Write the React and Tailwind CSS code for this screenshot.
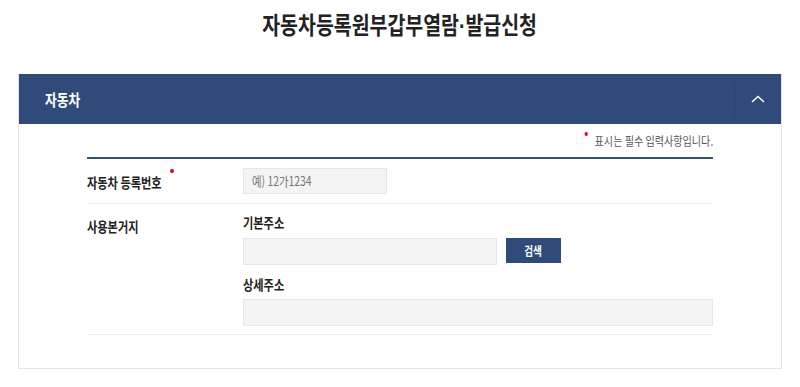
const font = { fontFamily: '"Noto Sans CJK KR", "Noto Sans", sans-serif' };

// the reference type is set narrow, so text runs are squeezed horizontally
const narrow = "whitespace-nowrap scale-x-[0.8] origin-left";

const Field = ({ className = "", placeholder = "" }) => (
  <div className={`bg-[#f4f4f4] border border-[#e6e6e6] flex items-center px-[8px] ${className}`}>
    {placeholder && <span className={`${narrow} inline-block text-[13px] text-[#777]`}>{placeholder}</span>}
  </div>
);

const Label = ({ children, className = "" }) => (
  <span className={`${narrow} block text-[14px] leading-[20px] font-bold text-[#222] ${className}`}>{children}</span>
);

export default function App() {
  return (
    <div className="w-[800px] h-[387px] bg-white overflow-hidden text-[14px] leading-[20px]" style={font}>
      {/* TITLE */}
      <div className="pt-[8px] h-[74px] flex justify-center">
        <h1 className="inline-block whitespace-nowrap scale-x-[0.81] origin-center text-[24px] leading-[32px] font-bold text-[#222]">
          자동차등록원부갑부열람<span className="font-['Liberation_Sans',sans-serif]">·</span>발급신청
        </h1>
      </div>

      {/* PANEL */}
      <section className="mx-[18px] border border-[#e4e4e4] border-t-0">
        <div className="h-[50px] bg-[#2f4b79] flex items-center justify-between">
          <h2 className={`${narrow} inline-block ml-[26px] text-white text-[16px] font-bold`}>자동차</h2>
          <div className="h-[36px] w-[47px] border-l border-[#294371] flex items-center justify-center">
            <svg width="14" height="8" viewBox="0 0 14 8" fill="none">
              <path d="M1 7 L7 1.5 L13 7" stroke="white" strokeWidth="1.5" />
            </svg>
          </div>
        </div>

        <div className="px-[68px] pb-[33px]">
          <div className="h-[33px] pt-[9px] flex justify-end">
            <p className="inline-flex items-start whitespace-nowrap scale-x-[0.84] origin-right text-[12px] leading-[16px] text-[#555]">
              <span className="w-[4px] h-[4px] rounded-full bg-[#e60012] mr-[8px] -mt-[1px]" />
              표시는 필수 입력사항입니다.
            </p>
          </div>

          <div className="border-t-2 border-[#34507f]">
            {/* ROW 1 */}
            <div className="flex items-center h-[45px] border-b border-[#eeeeee]">
              <div className="w-[156px] flex items-start">
                <Label className="mt-[1px]">자동차 등록번호</Label>
                <span className="shrink-0 w-[4px] h-[4px] rounded-full bg-[#e60012] -ml-[10px] -mt-[2px]" />
              </div>
              <Field className="w-[144px] h-[26px] -mt-[1px]" placeholder="예) 12가1234" />
            </div>

            {/* ROW 2 */}
            <div className="flex border-b border-[#eeeeee] pt-[8px] pb-[8px]">
              <div className="w-[156px] pt-[4px]">
                <Label>사용본거지</Label>
              </div>
              <div className="flex-1">
                <Label>기본주소</Label>
                <div className="flex gap-[9px] mt-[6px]">
                  <Field className="w-[254px] h-[27px]" />
                  <button className="w-[55px] h-[25px] bg-[#2f4b79] flex items-center justify-center">
                    <span className="inline-block scale-x-[0.8] text-white text-[12px] font-bold">검색</span>
                  </button>
                </div>
                <Label className="mt-[9px]">상세주소</Label>
                <Field className="mt-[5px] w-full h-[27px]" />
              </div>
            </div>
          </div>
        </div>
      </section>
    </div>
  );
}
